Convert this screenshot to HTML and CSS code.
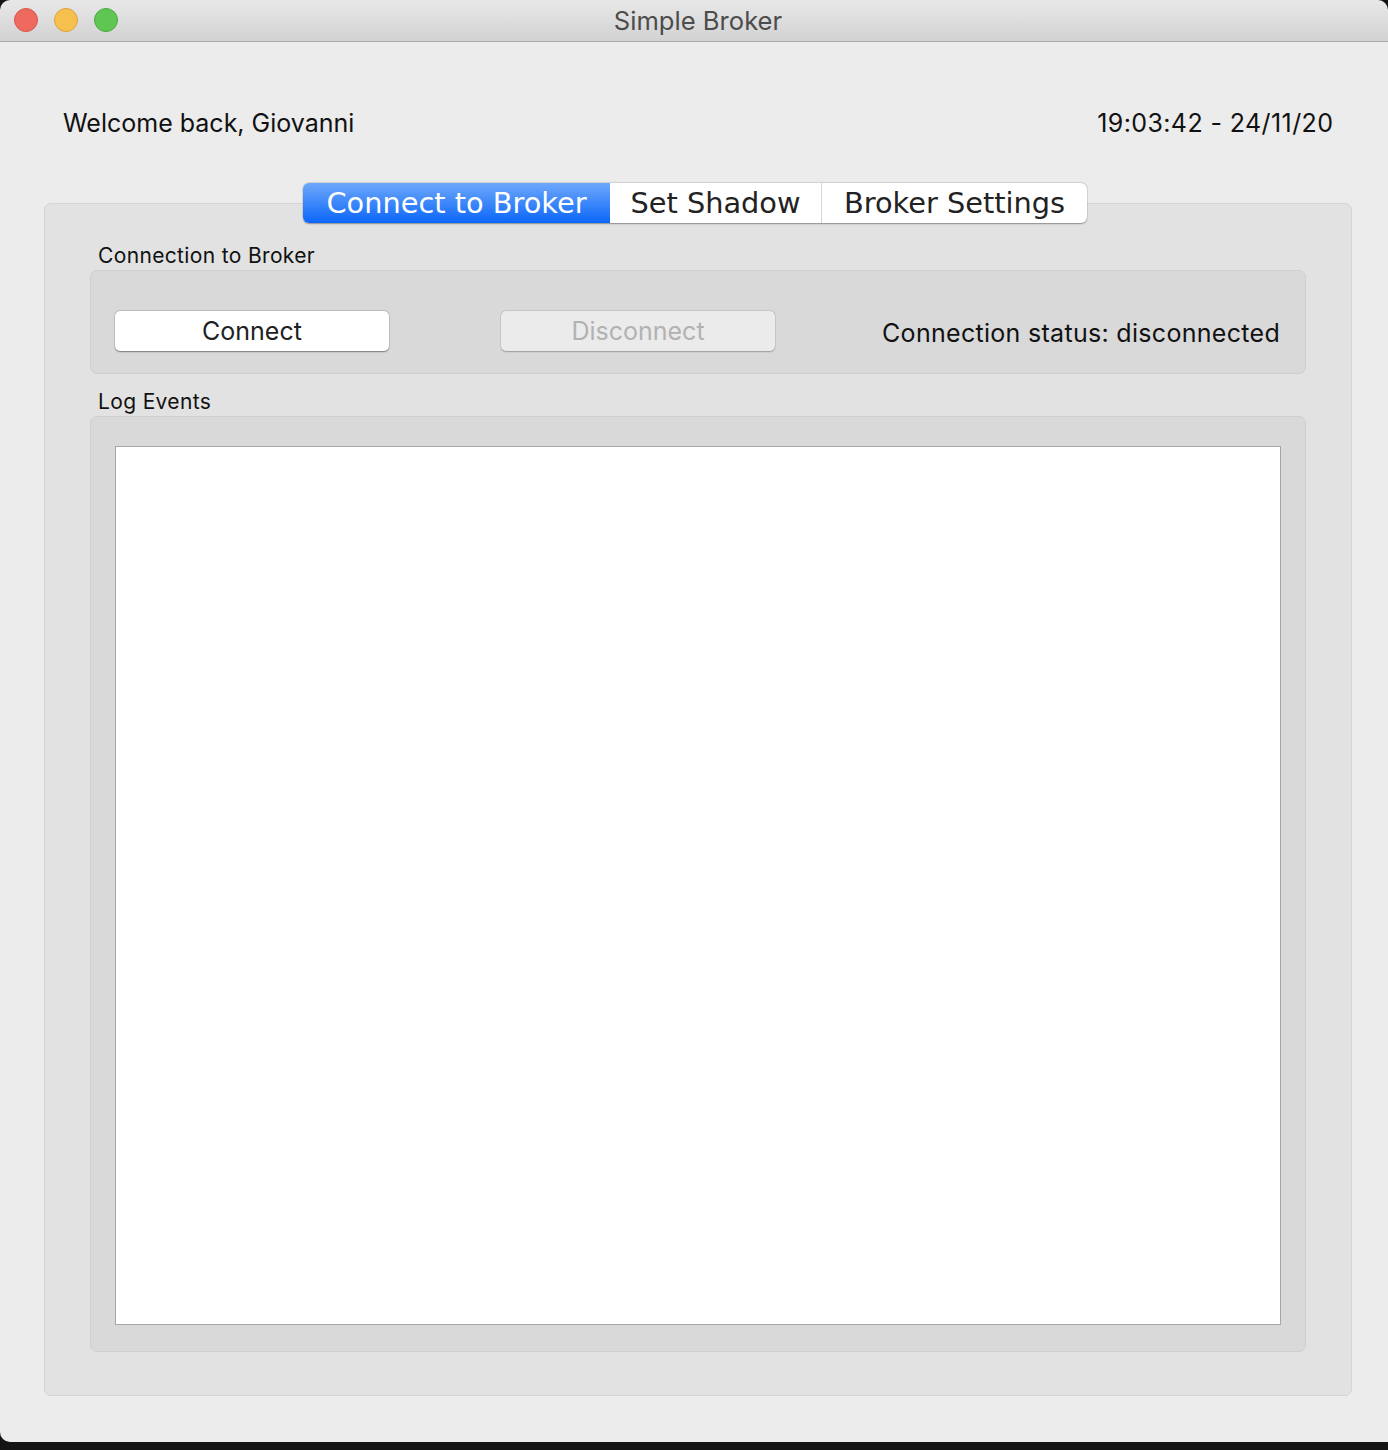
FILE: index.html
```html
<!DOCTYPE html>
<html>
<head>
<meta charset="utf-8">
<link rel="stylesheet" href="styles.css">
</head>
<body>
<div class="window">
  <div class="titlebar">
    <div class="lights">
      <span class="light red"></span>
      <span class="light yellow"></span>
      <span class="light green"></span>
    </div>
    <div class="title">Simple Broker</div>
  </div>
  <div class="content">
    <div class="header">
      <span class="welcome">Welcome back, Giovanni</span>
      <span class="clock">19:03:42 - 24/11/20</span>
    </div>
    <div class="tabwidget">
      <div class="tabbar">
        <div class="tab active t1">Connect to Broker</div>
        <div class="tab t2">Set Shadow</div>
        <div class="tab t3">Broker Settings</div>
      </div>
      <div class="tabpanel">
        <div class="grouplabel">Connection to Broker</div>
        <div class="group conn">
          <div class="btn">Connect</div>
          <div class="btn disabled">Disconnect</div>
          <div class="status">Connection status: disconnected</div>
        </div>
        <div class="grouplabel log-label">Log Events</div>
        <div class="group log">
          <div class="textarea"></div>
        </div>
      </div>
    </div>
  </div>
  <div class="bottombar"></div>
</div>
</body>
</html>
```
FILE: styles.css
```css
* { box-sizing: border-box; }
html, body { margin: 0; padding: 0; background: #141414; }
body { width: 1388px; height: 1450px; overflow: hidden; font-family: Inter, "Liberation Sans", sans-serif; }
.window { width: 1388px; height: 1450px; display: flex; flex-direction: column; }
.titlebar {
  height: 42px; flex: none; position: relative;
  background: linear-gradient(#e8e8e8, #d2d2d2);
  border-bottom: 1px solid #a9a9a9;
  border-radius: 10px 10px 0 0;
  display: flex; align-items: center; justify-content: center;
}
.lights { position: absolute; left: 14px; top: 8px; display: flex; gap: 16px; }
.light { width: 24px; height: 24px; border-radius: 50%; display: block; }
.red { background: #ee6a5e; border: 1px solid #d6554a; }
.yellow { background: #f6c04f; border: 1px solid #dea23b; }
.green { background: #5fc553; border: 1px solid #4aab3e; }
.title { font-size: 25.6px; color: #4c4c4c; margin-left: 8px; padding-bottom: 1px; }
.content { flex: 1; background: #ececec; padding: 0 36px 0 44px; border-radius: 0 0 0 10px; display: flex; flex-direction: column; }
.header { display: flex; justify-content: space-between; align-items: center; height: 40px; margin-top: 61px; padding: 0 19px 0 19px; font-size: 25px; color: #111; }
.clock { letter-spacing: 0.4px; margin-right: -0.4px; }
.tabwidget { margin-top: 40px; position: relative; width: 1308px; }
.tabbar { display: flex; position: absolute; left: 259px; top: 0; z-index: 2;
  height: 40px; border-radius: 6px; background: #fff;
  box-shadow: 0 0.5px 1.5px rgba(0,0,0,0.35), 0 0 0 0.5px rgba(0,0,0,0.08);
}
.tab { height: 40px; display: flex; align-items: center; justify-content: center; font-family: "DejaVu Sans", sans-serif; font-size: 28.8px; color: #222; }
.t1 { width: 307px; }
.t2 { width: 212px; border-right: 1px solid #d6d6d6; }
.t3 { width: 265px; }
.tab.active { background: linear-gradient(#6ea8fb, #0b66f9); color: #fff; border-radius: 6px 0 0 6px; }
.tabpanel { margin-top: 20px; height: 1193px; background: #e2e2e2; border: 1px solid #d4d4d4; border-radius: 7px; padding: 30px 45px 0 45px; }
.grouplabel { font-size: 21px; letter-spacing: 0.35px; color: #111; padding: 6px 0 0 8px; height: 36px; display: flex; align-items: center; }
.group { background: #d9d9d9; border: 1px solid #cfcfcf; border-radius: 7px; }
.conn { height: 104px; display: flex; align-items: flex-start; padding: 40px 25px 0 24px; }
.btn { width: 274px; height: 40px; background: #fff; border-radius: 5px; box-shadow: 0 0.5px 1.5px rgba(0,0,0,0.4), 0 0 0 0.5px rgba(0,0,0,0.1); font-size: 25px; color: #222; display: flex; align-items: center; justify-content: center; }
.btn.disabled { margin-left: 112px; background: #ebebeb; color: #b2b2b2; box-shadow: 0 0.5px 1.5px rgba(0,0,0,0.25), 0 0 0 0.5px rgba(0,0,0,0.08); }
.status { margin-left: auto; font-size: 25px; letter-spacing: 0.3px; color: #111; height: 40px; display: flex; align-items: center; margin-top: 2px; }
.log-label { height: 42px; padding-top: 12px; }
.log { height: 936px; padding: 29px 24px 26px 24px; }
.textarea { height: 879px; background: #fff; border: 1px solid #a6a6a6; }
.bottombar { height: 8px; background: #141414; flex: none; }
```
